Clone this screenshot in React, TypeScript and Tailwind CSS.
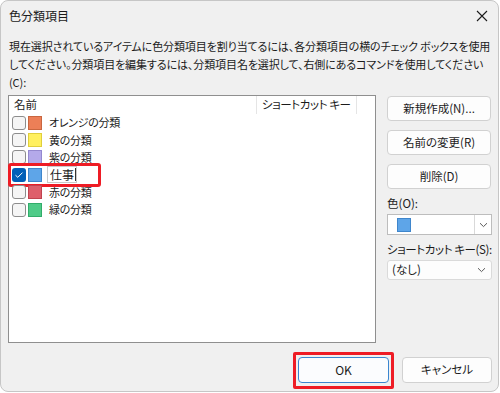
import React from "react";

const rows = [
  { name: "オレンジの分類", color: "#ec7f57", border: "#c9663f" },
  { name: "黄の分類", color: "#fff05e", border: "#e0cf3c" },
  { name: "紫の分類", color: "#b4a9ea", border: "#9488cf" },
  { name: "仕事", color: "#5ea5e8", border: "#3f86cc", checked: true, editing: true },
  { name: "赤の分類", color: "#de5f6b", border: "#c0434f" },
  { name: "緑の分類", color: "#4fcb88", border: "#32ac6a" },
];

function Chevron() {
  return (
    <svg width="9" height="6" viewBox="0 0 9 6" fill="none">
      <path d="M1 1.2 L4.5 4.6 L8 1.2" stroke="#5a5a5a" strokeWidth="1" />
    </svg>
  );
}

function Btn({ children }: { children: React.ReactNode }) {
  return (
    <div className="h-[25px] w-[104px] flex items-center justify-center rounded-[4px] border border-[#d1d1d1] bg-[#fdfdfd] text-[11.5px] text-[#1b1b1b] whitespace-nowrap">
      {children}
    </div>
  );
}

export default function App() {
  return (
    <div className="w-[500px] h-[393px] bg-white [font-family:'Noto_Sans_CJK_JP',sans-serif] [font-feature-settings:'palt'] text-[#1b1b1b]">
      <div className="w-[499px] h-[392px] rounded-[8px] border border-[#c6c6c6] bg-[#f0f0f0] flex flex-col">
        {/* title bar */}
        <div className="h-[30px] flex items-center justify-between pl-[8px] pr-[9px] shrink-0">
          <span className="text-[12px] leading-none">色分類項目</span>
          <svg width="12" height="12" viewBox="0 0 12 12" className="mr-[1px]">
            <path d="M1 1 L11 11 M11 1 L1 11" stroke="#1b1b1b" strokeWidth="1.1" />
          </svg>
        </div>
        {/* description */}
        <div className="pl-[8px] pt-[6px] text-[11px] leading-[18px] whitespace-nowrap tracking-[-0.1px]">
          <div>現在選択されているアイテムに色分類項目を割り当てるには、各分類項目の横のチェック ボックスを使用</div>
          <div>してください。分類項目を編集するには、分類項目名を選択して、右側にあるコマンドを使用してください</div>
          <div>(C):</div>
        </div>
        {/* main */}
        <div className="flex mt-[4px] pl-[7px]">
          {/* list */}
          <div className="w-[368px] h-[248px] border border-[#8f8f8f] bg-white">
            <div className="h-[18px] flex text-[11.5px] leading-none items-center whitespace-nowrap">
              <div className="w-[248px] pl-[5px] h-full flex items-center border-r border-[#e5e5e5]">名前</div>
              <div className="w-[100px] pl-[5px] h-full flex items-center border-r border-[#e5e5e5] tracking-[-0.4px]">ショートカット キー</div>
            </div>
            <div className="flex flex-col">
              {rows.map((r) => (
                <div key={r.name} className="relative h-[17.4px] flex items-center pl-[3px] text-[11px] whitespace-nowrap">
                  <div
                    className={
                      r.checked
                        ? "w-[14px] h-[14px] rounded-[3px] bg-[#005fb8] flex items-center justify-center"
                        : "w-[14px] h-[14px] rounded-[3px] border border-[#8d8d8d] bg-[#f5f5f5]"
                    }
                  >
                    {r.checked && (
                      <svg width="10" height="8" viewBox="0 0 10 8">
                        <path d="M1.5 4.2 L3.8 6.3 L8.5 1.6" stroke="white" strokeWidth="1" fill="none" />
                      </svg>
                    )}
                  </div>
                  <div
                    className="ml-[2px] w-[14px] h-[14px] border"
                    style={{ backgroundColor: r.color, borderColor: r.border }}
                  />
                  {r.editing ? (
                    <div className="ml-[5px] h-[17px] w-[30px] border border-[#c9c9c9] bg-white flex items-center pl-[2px] text-[12px] leading-none">
                      仕事
                      <span className="ml-[1px] w-px h-[13px] bg-[#333]" />
                    </div>
                  ) : (
                    <span className="ml-[7px] leading-none tracking-[-0.3px]">{r.name}</span>
                  )}
                  {r.editing && (
                    <div className="absolute left-[-1px] top-[-3px] w-[93px] h-[24px] border-[3px] border-[#ee1c25] rounded-[3px]" />
                  )}
                </div>
              ))}
            </div>
          </div>
          {/* right column */}
          <div className="ml-[11px] flex flex-col pt-[1px]">
            <div className="flex flex-col gap-[9px]">
              <Btn>新規作成(N)...</Btn>
              <Btn>名前の変更(R)</Btn>
              <Btn>削除(D)</Btn>
            </div>
            <div className="mt-[5px] text-[11.5px] leading-[18px]">色(O):</div>
            <div className="mt-[2px] w-[105px] h-[21px] border border-[#bdbdbd] bg-white flex items-center">
              <div className="ml-[9px] w-[14px] h-[14px] bg-[#5ea5e8] border border-[#3f86cc]" />
              <div className="ml-auto w-[17px] h-full border-l border-[#d9d9d9] flex items-center justify-center bg-white">
                <Chevron />
              </div>
            </div>
            <div className="mt-[5px] text-[11.5px] leading-[18px] whitespace-nowrap tracking-[-0.4px]">ショートカット キー(S):</div>
            <div className="mt-[2px] w-[105px] h-[20px] rounded-[3px] border border-[#dadada] bg-[#fdfdfd] flex items-center pl-[4px] pr-[5px] text-[11.5px] justify-between">
              <span>(なし)</span>
              <Chevron />
            </div>
          </div>
        </div>
        {/* bottom buttons */}
        <div className="flex justify-end mt-[14px] pr-[6px] gap-[13px]">
          <div className="relative">
            <div className="w-[91px] h-[26px] rounded-[4px] border border-[#3a86d0] bg-[#fbfcfe] flex items-center justify-center text-[12px]">OK</div>
            <div className="absolute -left-[5px] -top-[5px] w-[101px] h-[37px] border-[3px] border-[#ee1c25] rounded-[2px]" />
          </div>
          <div className="w-[90px] h-[26px] rounded-[4px] border border-[#d1d1d1] bg-[#fdfdfd] flex items-center justify-center text-[11.5px]">キャンセル</div>
        </div>
      </div>
    </div>
  );
}
